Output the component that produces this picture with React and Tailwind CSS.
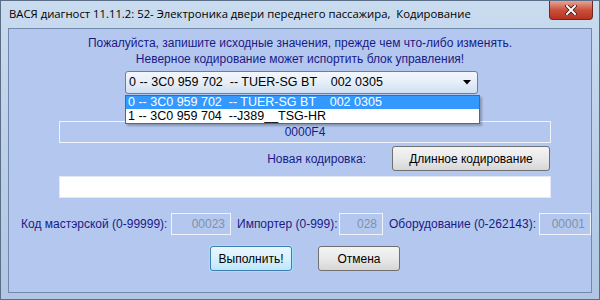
import React from "react";

const FONT = { fontFamily: "'Liberation Sans', Arial, sans-serif" };

function ReadBox({ value, className }) {
  return (
    <div
      className={`h-[22px] border border-[#eef3fc] flex items-center justify-end pr-[5px] text-[#8090a8] ${className}`}
    >
      {value}
    </div>
  );
}

export default function App() {
  return (
    <div
      className="w-[600px] h-[300px] relative overflow-hidden border border-[#5a6e88] bg-gradient-to-b from-[#c9dbef] via-[#bcd0e8] to-[#b0c6e2]"
      style={FONT}
    >
      {/* title bar */}
      <div
        className="h-[27px] flex items-center pl-[8px] text-[11.3px] text-black whitespace-nowrap"
        style={{ fontFamily: "'Open Sans', 'Noto Sans', sans-serif" }}
      >
        ВАСЯ диагност 11.11.2: 52- Электроника двери переднего пассажира,&nbsp; Кодирование
      </div>
      <div className="absolute top-0 right-[6px] w-[44px] h-[19px] rounded-b-[4px] border border-t-0 border-[#6e2a22] bg-gradient-to-b from-[#e8a393] via-[#c9503c] to-[#b8301f] flex items-center justify-center">
        <svg width="12" height="10" viewBox="0 0 12 10">
          <path d="M2 1 L10 9 M10 1 L2 9" stroke="#3a1010" strokeWidth="3.6" strokeLinecap="square" />
          <path d="M2 1 L10 9 M10 1 L2 9" stroke="#ffffff" strokeWidth="2" strokeLinecap="square" />
        </svg>
      </div>

      {/* client */}
      <div className="mx-[7px] h-[265px] border border-[#7189ad] bg-[#b4c8ef] relative text-[12px] text-[#1a1a86] whitespace-nowrap">
        <div className="pt-[6px] text-center leading-[16px]">
          Пожалуйста, запишите исходные значения, прежде чем что-либо изменять.
        </div>
        <div className="text-center leading-[16px]">
          Неверное кодирование может испортить блок управления!
        </div>

        <div className="mt-[4px] ml-[116px] w-[353px] h-[23px] rounded-[3px] border border-[#6f7f93] bg-gradient-to-b from-[#f3f7fc] via-[#e6eef8] to-[#cfe0f2] flex items-center justify-between pl-[3px] pr-[6px] text-black text-[12.5px]">
          <span className="whitespace-pre">0 -- 3C0 959 702  -- TUER-SG BT    002 0305</span>
          <svg width="8" height="5" viewBox="0 0 8 5">
            <path d="M0 0 H8 L4 4.5 Z" fill="#000" />
          </svg>
        </div>

        {/* open dropdown list */}
        <div className="absolute left-[116px] top-[66px] w-[355px] border border-[#646464] bg-white text-black text-[12.5px] z-10 shadow-[2px_2px_2px_rgba(0,0,0,0.25)]">
          <div className="h-[13px] bg-[#3399ff] text-white leading-[13px] pl-[2px] whitespace-pre">
            0 -- 3C0 959 702  -- TUER-SG BT    002 0305
          </div>
          <div className="h-[14px] leading-[14px] pl-[2px] whitespace-pre">
            1 -- 3C0 959 704  --J389__TSG-HR
          </div>
        </div>

        <div className="mt-[27px] ml-[50px] w-[492px] h-[22px] border border-[#eef3fc] flex items-center justify-center text-[#1a1a86]">
          0000F4
        </div>

        <div className="mt-[3px] flex items-center h-[25px]">
          <div className="w-[357px] text-right">Новая кодировка:</div>
          <div className="ml-[26px] w-[158px] h-[25px] rounded-[3px] border border-[#707070] bg-gradient-to-b from-[#f4f4f4] via-[#e9e9e9] to-[#d6d6d6] flex items-center justify-center text-black">
            Длинное кодирование
          </div>
        </div>

        <div className="mt-[5px] ml-[50px] w-[492px] h-[22px] bg-white border border-[#e2e8f4]" />

        <div className="mt-[15px] flex items-center h-[22px]">
          <span className="ml-[12px] w-[150px]">Код мастэрской (0-99999):</span>
          <ReadBox value="00023" className="w-[60px]" />
          <span className="ml-[6px] w-[102px]">Импортер (0-999):</span>
          <ReadBox value="028" className="w-[44px]" />
          <span className="ml-[6px] w-[150px]">Оборудование (0-262143):</span>
          <ReadBox value="00001" className="w-[52px]" />
        </div>

        <div className="mt-[11px] flex">
          <div className="ml-[201px] w-[82px] h-[25px] rounded-[3px] border border-[#3c7fb1] shadow-[0_0_0_1px_#9fe0ff] bg-gradient-to-b from-[#eaf6fd] via-[#d9f0fc] to-[#bee6fd] flex items-center justify-center text-black">
            Выполнить!
          </div>
          <div className="ml-[26px] w-[82px] h-[25px] rounded-[3px] border border-[#707070] bg-gradient-to-b from-[#f4f4f4] via-[#e9e9e9] to-[#d6d6d6] flex items-center justify-center text-black">
            Отмена
          </div>
        </div>
      </div>
    </div>
  );
}
